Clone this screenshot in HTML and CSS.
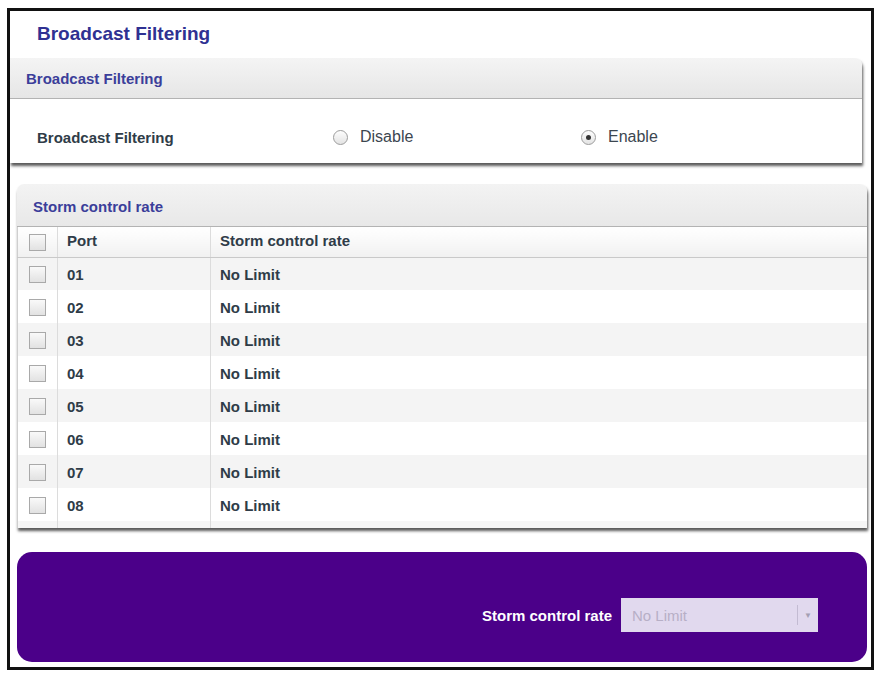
FILE: index.html
```html
<!DOCTYPE html>
<html lang="en">
<head>
    <meta charset="UTF-8">
    <title>Broadcast Filtering</title>
    <link rel="stylesheet" href="styles.css">
</head>
<body>
    <div class="frame">
        <h1 class="page-title">Broadcast Filtering</h1>

        <!-- Broadcast filtering on / off -->
        <div class="panel filter-panel">
            <div class="panel-head">Broadcast Filtering</div>
            <div class="filter-row">
                <span class="filter-label">Broadcast Filtering</span>
                <label class="radio-option disable-option"><span class="radio"></span>Disable</label>
                <label class="radio-option"><span class="radio checked"></span>Enable</label>
            </div>
        </div>

        <!-- Per-port storm control -->
        <div class="panel storm-panel">
            <div class="panel-head">Storm control rate</div>
            <table class="port-table">
                <thead>
                    <tr>
                        <th class="col-check"><span class="checkbox"></span></th>
                        <th class="col-port">Port</th>
                        <th>Storm control rate</th>
                    </tr>
                </thead>
                <tbody>
                    <tr><td class="col-check"><span class="checkbox"></span></td><td>01</td><td>No Limit</td></tr>
                    <tr><td class="col-check"><span class="checkbox"></span></td><td>02</td><td>No Limit</td></tr>
                    <tr><td class="col-check"><span class="checkbox"></span></td><td>03</td><td>No Limit</td></tr>
                    <tr><td class="col-check"><span class="checkbox"></span></td><td>04</td><td>No Limit</td></tr>
                    <tr><td class="col-check"><span class="checkbox"></span></td><td>05</td><td>No Limit</td></tr>
                    <tr><td class="col-check"><span class="checkbox"></span></td><td>06</td><td>No Limit</td></tr>
                    <tr><td class="col-check"><span class="checkbox"></span></td><td>07</td><td>No Limit</td></tr>
                    <tr><td class="col-check"><span class="checkbox"></span></td><td>08</td><td>No Limit</td></tr>
                    <tr class="filler"><td class="col-check"></td><td></td><td></td></tr>
                </tbody>
            </table>
        </div>

        <!-- Edit bar for selected ports -->
        <div class="edit-bar">
            <span class="edit-label">Storm control rate</span>
            <div class="select-box">
                <span class="select-value">No Limit</span>
                <span class="select-arrow">&#9660;</span>
            </div>
        </div>
    </div>
</body>
</html>
```

FILE: styles.css
```css
* {
    box-sizing: border-box;
}
body {
    margin: 0;
    background: white;
    font-family: "Liberation Sans", Arial, sans-serif;
    font-size: 15px;
    color: #2f3c48;
}
.frame {
    margin: 8px 0 0 7px;
    width: 867px;
    height: 662px;
    border: 3px solid #111;
    display: flex;
    flex-direction: column;
}
.page-title {
    margin: 0;
    padding: 12px 0 0 27px;
    height: 47px;
    font-size: 19px;
    font-weight: bold;
    color: #2f3192;
}
.panel {
    background: white;
    border-radius: 7px 7px 0 0;
    box-shadow: 1px 3px 3px rgba(0, 0, 0, 0.65);
}
.panel-head {
    height: 41px;
    padding: 12px 0 0 16px;
    font-weight: bold;
    color: #3b3e9a;
    background: linear-gradient(#f4f4f4, #e6e6e6);
    border-bottom: 1px solid #b3b3b3;
    border-radius: 7px 7px 0 0;
}
.filter-panel {
    margin-right: 9px;
}
.filter-panel .panel-head {
    border-top-left-radius: 0;
}
.filter-row {
    height: 64px;
    display: flex;
    align-items: center;
    padding: 12px 0 0 27px;
}
.filter-label {
    font-weight: bold;
    width: 296px;
}
.radio-option {
    display: flex;
    align-items: center;
    font-size: 16px;
    color: #3c4650;
}
.disable-option {
    width: 248px;
}
.radio {
    width: 15px;
    height: 15px;
    margin-right: 12px;
    border: 1px solid #9c9c9c;
    border-radius: 50%;
    background: linear-gradient(#fdfdfd, #e3e3e3);
    display: flex;
    align-items: center;
    justify-content: center;
}
.radio.checked::after {
    content: "";
    width: 5px;
    height: 5px;
    border-radius: 50%;
    background: #333;
}
.storm-panel {
    margin: 21px 4px 0 7px;
}
.storm-panel .panel-head {
    height: 43px;
    padding-top: 14px;
    background: linear-gradient(#f3f3f3, #e8e8e8);
}
.port-table {
    width: 100%;
    border-collapse: collapse;
    font-weight: bold;
}
.port-table th,
.port-table td {
    height: 33px;
    padding: 0 0 0 9px;
    text-align: left;
    border-left: 1px solid #dcdcdc;
}
.port-table th {
    height: 30px;
    padding-bottom: 2px;
    background: linear-gradient(#ffffff, #f1f1f1);
    border-bottom: 1px solid #c9c9c9;
}
.port-table .col-check {
    width: 40px;
    padding: 0;
    text-align: center;
    border-left: 1px solid #cfcfcf;
}
.port-table .col-port {
    width: 153px;
}
.port-table tbody td {
    padding-top: 2px;
}
.port-table tbody tr:nth-child(odd) {
    background: #f4f4f4;
}
.port-table tr.filler td {
    height: 7px;
    padding: 0;
    background: #f6f6f6;
}
.checkbox {
    display: inline-block;
    width: 17px;
    height: 17px;
    vertical-align: middle;
    border: 1px solid #a9a9a9;
    background: linear-gradient(#f9f9f9, #e2e2e2);
}
.edit-bar {
    margin: 24px 4px 0 7px;
    height: 110px;
    border-radius: 15px;
    background: #4b0089;
    display: flex;
    align-items: center;
    justify-content: flex-end;
    padding: 16px 49px 0 0;
}
.edit-label {
    color: white;
    font-weight: bold;
    margin-right: 9px;
}
.select-box {
    width: 197px;
    height: 34px;
    background: #e1d9ee;
    display: flex;
    align-items: center;
    color: #b7afc6;
}
.select-value {
    flex: 1;
    padding-left: 11px;
}
.select-arrow {
    width: 21px;
    height: 20px;
    border-left: 1px solid #c3bbd2;
    font-size: 8px;
    color: #a59fb3;
    display: flex;
    align-items: center;
    justify-content: center;
}
```
